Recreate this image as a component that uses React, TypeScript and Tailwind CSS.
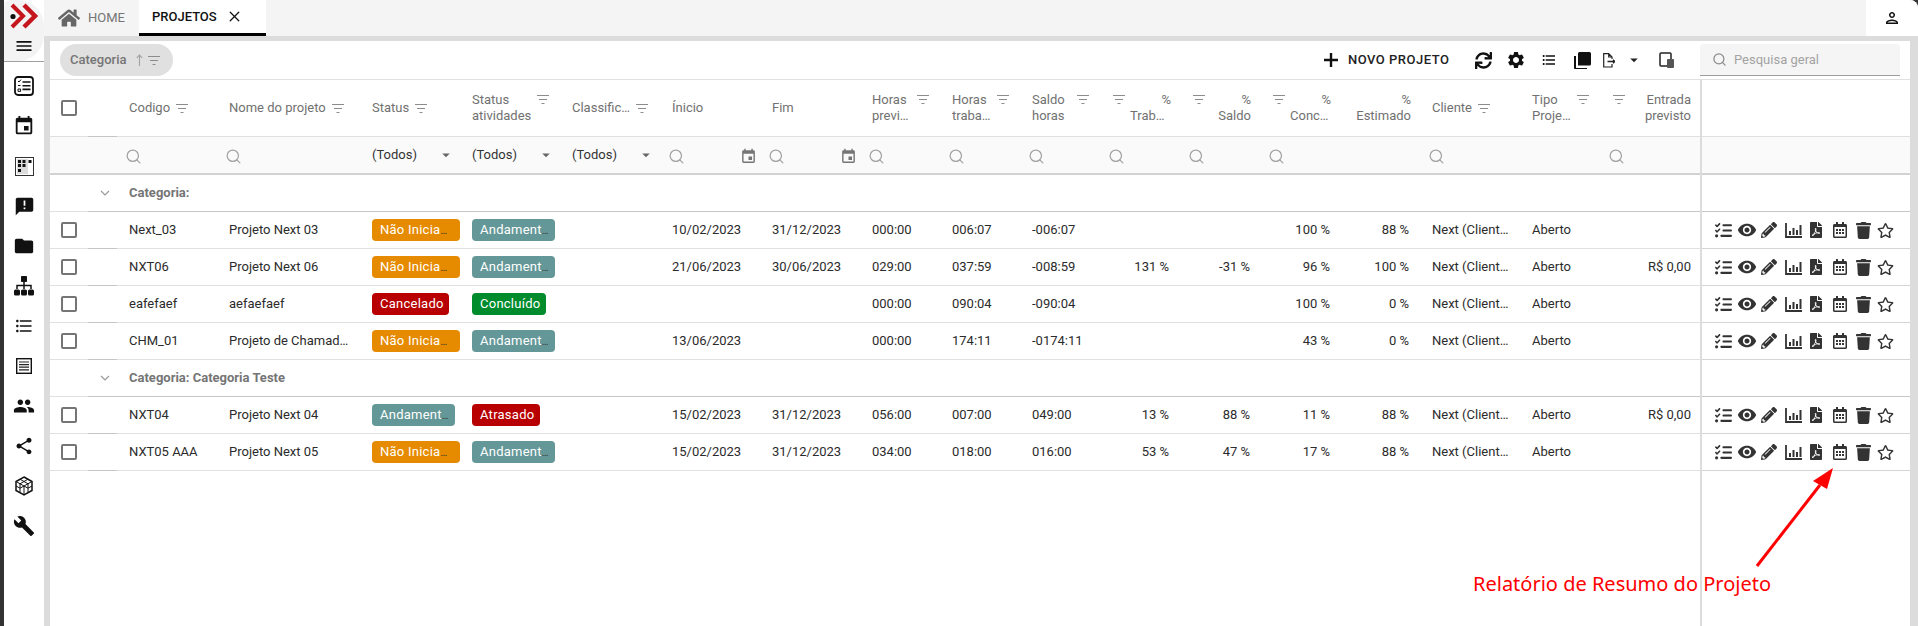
import { Search, X } from "lucide-react";
import {
  FaFilePdf,
  FaHome,
  FaPencilAlt,
  FaRegCalendarAlt,
  FaRegStar,
  FaSync,
  FaTrash,
} from "react-icons/fa";
import { FaListCheck } from "react-icons/fa6";
import {
  MdAnnouncement,
  MdArrowDropDown,
  MdBuild,
  MdEvent,
  MdFolder,
  MdFormatListBulleted,
  MdMenu,
  MdOutlinePerson,
  MdPeople,
  MdSettings,
  MdShare,
  MdVisibility,
} from "react-icons/md";

const GRID =
  "grid grid-cols-[38px_29px_100px_143px_100px_100px_100px_100px_100px_80px_80px_80px_80px_80px_80px_80px_100px_80px_100px]";

type Badge = { label: string; cut?: boolean; className: string };

type Project = {
  code: string;
  name: string;
  status: Badge;
  activity: Badge;
  start: string;
  end: string;
  planned: string;
  worked: string;
  balance: string;
  pctWorked: string;
  pctBalance: string;
  pctDone: string;
  pctEstimated: string;
  entry: string;
};

const notStarted = { label: "Não Inicia", cut: true, className: "w-[88px] bg-[#e68a00]" };
const ongoing = { label: "Andament", cut: true, className: "w-[83px] bg-[#649797]" };
const cancelled = { label: "Cancelado", className: "w-[77px] bg-[#b80000]" };
const done = { label: "Concluído", className: "w-[74px] bg-[#008c2d]" };
const late = { label: "Atrasado", className: "w-[68px] bg-[#b80000]" };

const groupOne: Project[] = [
  { code: "Next_03", name: "Projeto Next 03", status: notStarted, activity: ongoing, start: "10/02/2023", end: "31/12/2023", planned: "000:00", worked: "006:07", balance: "-006:07", pctWorked: "", pctBalance: "", pctDone: "100 %", pctEstimated: "88 %", entry: "" },
  { code: "NXT06", name: "Projeto Next 06", status: notStarted, activity: ongoing, start: "21/06/2023", end: "30/06/2023", planned: "029:00", worked: "037:59", balance: "-008:59", pctWorked: "131 %", pctBalance: "-31 %", pctDone: "96 %", pctEstimated: "100 %", entry: "R$ 0,00" },
  { code: "eafefaef", name: "aefaefaef", status: cancelled, activity: done, start: "", end: "", planned: "000:00", worked: "090:04", balance: "-090:04", pctWorked: "", pctBalance: "", pctDone: "100 %", pctEstimated: "0 %", entry: "" },
  { code: "CHM_01", name: "Projeto de Chamados", status: notStarted, activity: ongoing, start: "13/06/2023", end: "", planned: "000:00", worked: "174:11", balance: "-0174:11", pctWorked: "", pctBalance: "", pctDone: "43 %", pctEstimated: "0 %", entry: "" },
];

const groupTwo: Project[] = [
  { code: "NXT04", name: "Projeto Next 04", status: ongoing, activity: late, start: "15/02/2023", end: "31/12/2023", planned: "056:00", worked: "007:00", balance: "049:00", pctWorked: "13 %", pctBalance: "88 %", pctDone: "11 %", pctEstimated: "88 %", entry: "R$ 0,00" },
  { code: "NXT05 AAA", name: "Projeto Next 05", status: notStarted, activity: ongoing, start: "15/02/2023", end: "31/12/2023", planned: "034:00", worked: "018:00", balance: "016:00", pctWorked: "53 %", pctBalance: "47 %", pctDone: "17 %", pctEstimated: "88 %", entry: "" },
];

function Logo() {
  return (
    <svg width="40" height="30" viewBox="0 0 40 30">
      <polyline points="8,4 19,15 8,26" fill="none" stroke="#c4161c" strokeWidth="4" />
      <polyline points="20,4 31,15 20,26" fill="none" stroke="#c4161c" strokeWidth="4.5" />
      <circle cx="9" cy="15.5" r="2.6" fill="#111" />
    </svg>
  );
}

function TaskBoxIcon() {
  return (
    <svg width="20" height="20" viewBox="0 0 20 20" fill="none">
      <rect x="1" y="1" width="18" height="18" rx="3" stroke="#111" strokeWidth="1.8" />
      <path d="M4 5l1 1 2-2.4M4 9.5h2.6M4 13h2.6v2.4H4z" stroke="#111" strokeWidth="1" />
      <path d="M8.5 6h8M8.5 9.7h8M8.5 13.4h8" stroke="#111" strokeWidth="1.6" />
    </svg>
  );
}

function BoardIcon() {
  return (
    <svg width="19" height="19" viewBox="0 0 19 19">
      <rect x="0.5" y="0.5" width="18" height="18" fill="#fff" stroke="#333" />
      <rect x="2" y="2" width="11" height="15" fill="#dcdcdc" />
      <path d="M3 3h3v3H3zM7.5 3h3v3h-3zM13.5 3h3v3h-3zM3 7h3v3H3zM7.5 7h3v3h-3zM3 12h3v3H3z" fill="#111" />
    </svg>
  );
}

function SitemapIcon() {
  return (
    <svg width="20" height="20" viewBox="0 0 20 20">
      <rect x="7" y="0" width="6" height="6" rx="0.8" fill="#111" />
      <path d="M10 6v7M3 13v-3.500h14V13" fill="none" stroke="#111" strokeWidth="1.500" />
      <rect x="0" y="13.500" width="6" height="6" rx="1.500" fill="#111" />
      <rect x="7" y="13.500" width="6" height="6" rx="1.500" fill="#111" />
      <rect x="14" y="13.500" width="6" height="6" rx="1.500" fill="#111" />
    </svg>
  );
}

function ArticleIcon() {
  return (
    <svg width="16" height="16" viewBox="0 0 16 16">
      <rect x="0.7" y="0.7" width="14.6" height="14.6" fill="#fff" stroke="#111" strokeWidth="1.4" />
      <path d="M3 4h10M3 6.6h10M3 9.2h10M3 11.8h10" stroke="#222" strokeWidth="1.2" />
    </svg>
  );
}

function CubeIcon() {
  return (
    <svg width="20" height="20" viewBox="0 0 20 20" fill="none" stroke="#111" strokeWidth="1">
      <path d="M10 1l8 4.5v9L10 19l-8-4.5v-9z" strokeWidth="1.5" />
      <path d="M2 5.5L10 10l8-4.5M10 10v9M6 3.2l8 4.6v9M14 3.2L6 7.8v9M2 10l4 2.2 4-2.2 4 2.2 4-2.2" />
    </svg>
  );
}

function FilterIcon({ className = "" }: { className?: string }) {
  return (
    <svg width="12" height="9" viewBox="0 0 12 9" className={className}>
      <path d="M0 .5h12M2 4.5h8M4.500 8.500h3" stroke="#8c8c8c" strokeWidth="1" />
    </svg>
  );
}

function PlusIcon() {
  return (
    <svg width="14" height="14" viewBox="0 0 14 14">
      <path d="M7 0v14M0 7h14" stroke="#111" strokeWidth="2.400" />
    </svg>
  );
}

function SortUpIcon() {
  return (
    <svg width="7" height="12" viewBox="0 0 7 12" fill="none">
      <path d="M3.500 12V1M.8 3.800L3.500 1l2.700 2.800" stroke="#a3a3a3" strokeWidth="1.100" />
    </svg>
  );
}

function CopyIcon() {
  return (
    <svg width="17" height="17" viewBox="0 0 17 17">
      <path d="M4 1.500A1.500 1.500 0 0 1 5.500 0H15.500A1.500 1.500 0 0 1 17 1.500V12A1.500 1.500 0 0 1 15.500 13.500H4z" fill="#111" />
      <path d="M1 4v11.500A1.500 1.500 0 0 0 2.500 17H13" fill="none" stroke="#111" strokeWidth="2" />
    </svg>
  );
}

function ExportIcon() {
  return (
    <svg width="12" height="15" viewBox="0 0 12 15" fill="none" stroke="#222" strokeWidth="1.200">
      <path d="M9 11v3H.7V.7h5l3.300 3.300V6M5.700.7V4H9" />
      <path d="M4.500 8.500H12M10 6.800l1.800 1.700L10 10.200" strokeWidth="1.300" />
    </svg>
  );
}

function ColumnsIcon() {
  return (
    <svg width="15" height="16" viewBox="0 0 15 16">
      <path d="M8 14H2a1 1 0 0 1-1-1V2a1 1 0 0 1 1-1h9a1 1 0 0 1 1 1v5" fill="none" stroke="#222" strokeWidth="1.500" />
      <rect x="8" y="7" width="7" height="9" rx="1" fill="#555" />
    </svg>
  );
}

function ChartIcon() {
  return (
    <svg width="17" height="15" viewBox="0 0 17 15">
      <path d="M1 0v14h16" fill="none" stroke="#333" strokeWidth="1.800" />
      <path d="M4 8h2v4H4zM7.500 5h2v7h-2zM11 7h2v5h-2zM14.500 2h2v10h-2z" fill="#333" />
    </svg>
  );
}

function Checkbox() {
  return <div className="h-4 w-4 rounded-[2px] border-2 border-[#757575] bg-white" />;
}

function SidebarItem({ children }: { children: React.ReactNode }) {
  return <div className="flex h-10 items-center justify-center text-[#111]">{children}</div>;
}

function Sidebar() {
  return (
    <aside className="flex w-10 shrink-0 flex-col bg-white">
      <div className="h-[62px] border-b border-[#a0a0a0]">
        <div className="flex h-full flex-col items-center rounded-tl-[6px] rounded-r-[26px] bg-[#f3f3f3] pt-px">
          <Logo />
          <MdMenu size={20} className="mt-[5px] text-[#111]" />
        </div>
      </div>
      <div className="flex flex-col pt-1">
        <SidebarItem><TaskBoxIcon /></SidebarItem>
        <SidebarItem><MdEvent size={22} /></SidebarItem>
        <SidebarItem><BoardIcon /></SidebarItem>
        <SidebarItem><MdAnnouncement size={21} /></SidebarItem>
        <SidebarItem><MdFolder size={22} /></SidebarItem>
        <SidebarItem><SitemapIcon /></SidebarItem>
        <SidebarItem><MdFormatListBulleted size={20} /></SidebarItem>
        <SidebarItem><ArticleIcon /></SidebarItem>
        <SidebarItem><MdPeople size={22} /></SidebarItem>
        <SidebarItem><MdShare size={20} /></SidebarItem>
        <SidebarItem><CubeIcon /></SidebarItem>
        <SidebarItem><MdBuild size={22} /></SidebarItem>
      </div>
    </aside>
  );
}

function TabBar() {
  return (
    <div className="h-9 shrink-0 bg-[#333]">
      <div className="flex h-full overflow-hidden rounded-tr-[8px] bg-[#f4f4f4]">
        <div className="flex w-[95px] items-center gap-2 pl-[14px]">
          <FaHome size={22} className="text-[#666]" />
          <span className="text-[13px] text-[#757575]">HOME</span>
        </div>
        <div className="flex w-[127px] items-center border-b-[3px] border-black bg-white pl-[13px]">
          <span className="text-[13px] font-medium text-[#111]">PROJETOS</span>
          <X size={17} strokeWidth={1.800} className="ml-[9px] text-[#111]" />
        </div>
        <div className="ml-auto flex w-[52px] items-center justify-center bg-white">
          <MdOutlinePerson size={18} className="text-[#111]" />
        </div>
      </div>
    </div>
  );
}

function Toolbar() {
  return (
    <div className="flex h-[39px] items-center border-b border-[#e0e0e0] pl-[10px] pr-[10px]">
      <div className="flex h-8 w-[113px] items-center rounded-full bg-[#e0e0e0] pl-[10px] text-[13px] font-medium text-[#757575]">
        Categoria
        <span className="ml-[10px]"><SortUpIcon /></span>
        <FilterIcon className="ml-[5px]" />
      </div>
      <div className="ml-auto flex items-center">
        <PlusIcon />
        <span className="ml-[10px] w-[127px] text-[13px] font-medium tracking-[0.5px] text-[#222]">NOVO PROJETO</span>
        <FaSync size={17} className="text-[#111]" />
        <MdSettings size={20} className="ml-[14px] text-[#111]" />
        <MdFormatListBulleted size={16} className="ml-[15px] text-[#111]" />
        <div className="ml-[17px]"><CopyIcon /></div>
        <div className="ml-[12px]"><ExportIcon /></div>
        <MdArrowDropDown size={18} className="ml-[10px] text-[#222]" />
        <div className="ml-[16px]"><ColumnsIcon /></div>
      </div>
      <div className="ml-[26px] flex h-8 w-[200px] items-center gap-[7px] rounded-t-[4px] border-b border-[#9e9e9e] bg-[#f5f5f5] pl-3 text-[13px] text-[#a3a3a3]">
        <Search size={15} strokeWidth={2} className="text-[#8a8a8a]" />
        Pesquisa geral
      </div>
    </div>
  );
}

function InlineHead({ label, boxClass = "" }: { label: string; boxClass?: string }) {
  return (
    <div className="flex items-center gap-[6px] px-3">
      <span className={`truncate ${boxClass}`}>{label}</span>
      <FilterIcon className="shrink-0" />
    </div>
  );
}

function TwoLineHead({ one, two, boxClass }: { one: string; two: string; boxClass: string }) {
  return (
    <div className="flex items-center justify-between pl-3 pr-[11px]">
      <div className={`min-w-0 leading-4 ${boxClass}`}>
        <div>{one}</div>
        <div className="truncate">{two}</div>
      </div>
      <FilterIcon className="mb-[17px] shrink-0" />
    </div>
  );
}

function RightHead({ one, two, filter = true, boxClass, pad }: { one: string; two: string; filter?: boolean; boxClass: string; pad: string }) {
  return (
    <div className={`flex items-center justify-between pl-[13px] ${pad}`}>
      {filter ? <FilterIcon className="mb-[17px] shrink-0" /> : <span />}
      <div className="text-right leading-4">
        <div>{one}</div>
        <div className={`truncate text-right ${boxClass}`}>{two}</div>
      </div>
    </div>
  );
}

function HeadRow() {
  return (
    <div className={`${GRID} h-[57px] border-b border-[#e0e0e0] text-[13px] text-[#717171]`}>
      <div className="flex items-center pl-[11px]"><Checkbox /></div>
      <div className="-mb-px border-b border-[#c6c6c6]" />
      <InlineHead label="Codigo" />
      <InlineHead label="Nome do projeto" />
      <InlineHead label="Status" />
      <TwoLineHead one="Status" two="atividades" boxClass="w-[64px]" />
      <InlineHead label="Classificação" boxClass="w-[59px]" />
      <div className="flex items-center px-3">Ínicio</div>
      <div className="flex items-center px-3">Fim</div>
      <TwoLineHead one="Horas" two="previstas" boxClass="w-[40px]" />
      <TwoLineHead one="Horas" two="trabalhadas" boxClass="w-[40px]" />
      <TwoLineHead one="Saldo" two="horas" boxClass="w-[40px]" />
      <RightHead one="%" two="Trabalho" boxClass="w-[41px]" pad="pr-[9px]" />
      <RightHead one="%" two="Saldo" boxClass="w-[41px]" pad="pr-[9px]" />
      <RightHead one="%" two="Concluído" boxClass="w-[41px]" pad="pr-[9px]" />
      <RightHead one="%" two="Estimado" filter={false} boxClass="w-[58px]" pad="pr-[11px]" />
      <InlineHead label="Cliente" />
      <TwoLineHead one="Tipo" two="Projeto" boxClass="w-[40px]" />
      <RightHead one="Entrada" two="previsto" boxClass="w-[58px]" pad="pr-[9px]" />
    </div>
  );
}

function SelectCell() {
  return (
    <div className="flex items-center justify-between pl-3 pr-[5px] text-[#333]">
      (Todos)
      <MdArrowDropDown size={18} className="text-[#666]" />
    </div>
  );
}

function SearchCell({ calendar = false }: { calendar?: boolean }) {
  return (
    <div className="flex items-center justify-between pl-2 pr-[3px] pt-[2px]">
      <Search size={17} strokeWidth={1.700} className="text-[#a0a0a0]" />
      {calendar && <MdEvent size={17} className="text-[#757575]" />}
    </div>
  );
}

function FilterRow() {
  return (
    <div className={`${GRID} h-[38px] border-b-2 border-[#d2d2d2] bg-[#fafafa] text-[13px]`}>
      <div />
      <div />
      <SearchCell />
      <SearchCell />
      <SelectCell />
      <SelectCell />
      <SelectCell />
      <SearchCell calendar />
      <SearchCell calendar />
      <SearchCell />
      <SearchCell />
      <SearchCell />
      <SearchCell />
      <SearchCell />
      <SearchCell />
      <div />
      <SearchCell />
      <div />
      <SearchCell />
    </div>
  );
}

function GroupRow({ label }: { label: string }) {
  return (
    <div className="flex h-[37px]">
      <div className="w-[38px] border-b border-[#e0e0e0]" />
      <div className="flex flex-1 items-center border-b border-[#c6c6c6]">
        <svg width="10" height="6" viewBox="0 0 10 6" className="ml-[12px]">
          <path d="M1 1l4 4 4-4" fill="none" stroke="#9a9a9a" strokeWidth="1.200" />
        </svg>
        <span className="ml-[19px] text-[13px] font-bold text-[#757575]">{label}</span>
      </div>
    </div>
  );
}

function StatusBadge({ badge }: { badge: Badge }) {
  return (
    <div className="flex items-center pl-3">
      <span className={`h-[22px] whitespace-nowrap rounded-[4px] pl-2 text-[13px] leading-[22px] tracking-[0.25px] ${badge.className}`}>
        <span className="text-white">{badge.label}</span>
        {badge.cut && <span className="text-[10px] tracking-normal text-[#333]">…</span>}
      </span>
    </div>
  );
}

function Text({ children, className = "px-3" }: { children: React.ReactNode; className?: string }) {
  return <div className={`truncate leading-[36px] ${className}`}>{children}</div>;
}

function ProjectRow({ project }: { project: Project }) {
  return (
    <div className={`${GRID} h-[37px] border-b border-[#e0e0e0] text-[13px] text-[#2b2b2b]`}>
      <div className="flex items-center pl-[11px]"><Checkbox /></div>
      <div className="-mb-px border-b border-[#c6c6c6]" />
      <Text>{project.code}</Text>
      <Text className="pl-3 pr-2">{project.name}</Text>
      <StatusBadge badge={project.status} />
      <StatusBadge badge={project.activity} />
      <div />
      <Text>{project.start}</Text>
      <Text>{project.end}</Text>
      <Text>{project.planned}</Text>
      <Text>{project.worked}</Text>
      <Text>{project.balance}</Text>
      <Text className="pr-[11px] text-right">{project.pctWorked}</Text>
      <Text className="pr-[10px] text-right">{project.pctBalance}</Text>
      <Text className="pr-[10px] text-right">{project.pctDone}</Text>
      <Text className="pr-[11px] text-right">{project.pctEstimated}</Text>
      <Text className="pl-3 pr-[11px]">Next (Cliente)</Text>
      <Text>Aberto</Text>
      <Text className="pr-[9px] text-right">{project.entry}</Text>
    </div>
  );
}

function Actions() {
  return (
    <div className="flex h-[37px] items-center border-b border-[#d4d4d4] pl-[13px] text-[#333]">
      <div className="flex w-[22px]"><FaListCheck size={17} /></div>
      <div className="flex w-[24px]"><MdVisibility size={20} /></div>
      <div className="flex w-[24px]"><FaPencilAlt size={16} /></div>
      <div className="flex w-[23px]"><ChartIcon /></div>
      <div className="flex w-[24px]"><FaFilePdf size={16} /></div>
      <div className="flex w-[23px]"><FaRegCalendarAlt size={16} /></div>
      <div className="flex w-[22px]"><FaTrash size={17} /></div>
      <FaRegStar size={17} />
    </div>
  );
}

function RightPane() {
  return (
    <div className="flex-1 border-l-2 border-[#dcdcdc]">
      <div className="h-[57px] border-b border-[#e0e0e0]" />
      <div className="h-[38px] border-b-2 border-[#d2d2d2] bg-[#fafafa]" />
      <div className="h-[37px] border-b border-[#c6c6c6]" />
      {groupOne.map((project) => (
        <Actions key={project.code} />
      ))}
      <div className="h-[37px] border-b border-[#c6c6c6]" />
      {groupTwo.map((project) => (
        <Actions key={project.code} />
      ))}
    </div>
  );
}

export default function App() {
  return (
    <div className="relative flex h-[626px] w-[1918px] overflow-hidden bg-[#dcdcdc] [font-family:Roboto,sans-serif]">
      <div className="w-1 shrink-0 bg-[#333]" />
      <Sidebar />
      <main className="flex min-w-0 flex-1 flex-col">
        <TabBar />
        <div className="ml-[6px] mr-2 mt-[5px] flex min-h-0 flex-1 flex-col bg-white">
          <Toolbar />
          <div className="flex flex-1">
            <div className="w-[1650px] shrink-0">
              <HeadRow />
              <FilterRow />
              <GroupRow label="Categoria:" />
              {groupOne.map((project) => (
                <ProjectRow key={project.code} project={project} />
              ))}
              <GroupRow label="Categoria: Categoria Teste" />
              {groupTwo.map((project) => (
                <ProjectRow key={project.code} project={project} />
              ))}
            </div>
            <RightPane />
          </div>
        </div>
      </main>
      <svg width="100" height="120" viewBox="0 0 100 120" className="absolute left-[1745px] top-[460px]">
        <path d="M12 106L75 25" stroke="#ff0000" strokeWidth="3" />
        <path d="M88 8L68 21L82 29z" fill="#ff0000" />
      </svg>
      <span className="absolute left-[1473px] top-[570px] text-[20px] leading-7 text-[#ff0000] [font-family:'Noto_Sans',sans-serif]">
        Relatório de Resumo do Projeto
      </span>
    </div>
  );
}
